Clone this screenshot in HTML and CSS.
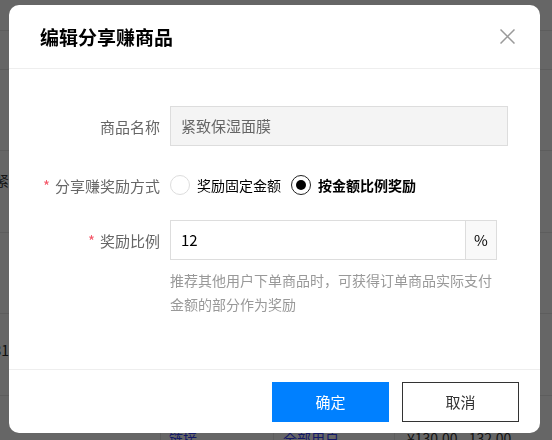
FILE: index.html
```html
<!DOCTYPE html>
<html lang="zh-CN">
<head>
<meta charset="utf-8">
<title>编辑分享赚商品</title>
<link rel="stylesheet" href="styles.css">
</head>
<body>
<div class="page">
  <div class="row row-top"></div>
  <div class="row row-head"></div>
  <div class="row row-a"></div>
  <div class="row row-b"><div class="bg-clip"><span class="bg-name">紧</span></div></div>
  <div class="row row-a"></div>
  <div class="row row-b"><div class="bg-date"><span>31</span></div></div>
  <div class="row row-last">
    <div class="cell cell-1"></div>
    <div class="cell cell-2"><span class="bg-link">链接</span></div>
    <div class="cell cell-3"><span class="bg-link">全部用户</span></div>
    <div class="cell cell-4"><span class="bg-price">¥130.00 - 132.00</span></div>
  </div>
</div>
<div class="mask"></div>
<div class="modal">
  <div class="modal-header">
    <h2 class="modal-title">编辑分享赚商品</h2>
    <span class="modal-close">
      <svg width="15" height="15" viewBox="0 0 15 15"><path d="M0.5 0.5 L14.5 14.5 M14.5 0.5 L0.5 14.5" stroke="#9a9a9a" stroke-width="1.5" fill="none"/></svg>
    </span>
  </div>
  <div class="modal-body">
    <div class="form-row row-name">
      <label class="form-label">商品名称</label>
      <div class="input input-disabled">紧致保湿面膜</div>
    </div>
    <div class="form-row row-radio">
      <label class="form-label"><span class="req">*</span>分享赚奖励方式</label>
      <div class="radio-group">
        <span class="radio"></span><span class="radio-text">奖励固定金额</span>
        <span class="radio radio-on"></span><span class="radio-text radio-text-on">按金额比例奖励</span>
      </div>
    </div>
    <div class="form-row row-ratio">
      <label class="form-label"><span class="req">*</span>奖励比例</label>
      <div class="input-group">
        <div class="input input-ratio">12</div>
        <div class="addon">%</div>
      </div>
    </div>
    <p class="helper">推荐其他用户下单商品时，可获得订单商品实际支付<br>金额的部分作为奖励</p>
  </div>
  <div class="modal-footer">
    <button class="btn btn-primary">确定</button>
    <button class="btn btn-default">取消</button>
  </div>
</div>
</body>
</html>
```
FILE: styles.css
```css
* { box-sizing: border-box; }
html, body { margin: 0; padding: 0; }
body {
  width: 552px;
  height: 440px;
  overflow: hidden;
  background: #fff;
  font-family: "Noto Sans CJK SC", "Noto Sans", sans-serif;
  color: #333;
}
.page { width: 552px; height: 440px; overflow: hidden; }
.row { border-bottom: 1px solid #e8e8e8; font-size: 14px; line-height: 20px; }
.row-top { height: 31px; }
.row-head { height: 39px; }
.row-a { height: 81px; }
.row-b { height: 82px; }
.bg-clip { width: 9px; overflow: hidden; padding-top: 19px; }
.bg-name { display: block; margin-left: -5px; white-space: nowrap; color: #333; }
.bg-date { width: 9px; display: flex; justify-content: flex-end; padding-top: 26px; white-space: nowrap; color: #222; }
.row-last { display: flex; height: 44px; border-bottom: none; overflow: hidden; }
.cell { padding-top: 32px; white-space: nowrap; }
.cell-1 { width: 160px; }
.cell-2 { width: 113px; border-left: 1px solid #e8e8e8; padding-left: 8px; }
.cell-3 { width: 121px; border-left: 1px solid #e8e8e8; padding-left: 9px; }
.cell-4 { flex: 1; border-left: 1px solid #e8e8e8; padding-left: 12px; }
.bg-link { color: #3340ff; text-decoration: underline; }
.bg-price { color: #333; }

.mask {
  position: fixed;
  inset: 0;
  background: rgba(0, 0, 0, 0.6);
}
.modal {
  position: absolute;
  left: 9px;
  top: 5px;
  width: 531px;
  height: 428px;
  background: #fff;
  border-radius: 10px;
  display: flex;
  flex-direction: column;
  overflow: hidden;
}
.modal-header {
  height: 64px;
  border-bottom: 1px solid #eee;
  display: flex;
  align-items: center;
  justify-content: space-between;
  padding: 0 25px 0 31px;
}
.modal-title {
  margin: 0;
  font-size: 19px;
  font-weight: 700;
  color: #000;
  line-height: 26px;
}
.modal-close { display: flex; width: 15px; height: 15px; }
.modal-body {
  flex: 1;
  padding-top: 37px;
}
.form-row { display: flex; align-items: center; }
.row-name { height: 40px; margin-bottom: 19px; }
.row-radio { height: 40px; margin-bottom: 15px; }
.row-ratio { height: 40px; }
.form-label {
  width: 161px;
  padding-right: 10px;
  text-align: right;
  font-size: 15px;
  color: #666;
  white-space: nowrap;
}
.req { color: #f5586a; margin-right: 5px; }
.input {
  height: 40px;
  border: 1px solid #ddd;
  padding-left: 10px;
  font-size: 15px;
  line-height: 38px;
}
.input-disabled { width: 338px; background: #f4f4f4; color: #666; }
.radio-group { display: flex; align-items: center; }
.radio {
  width: 20px;
  height: 20px;
  border: 1px solid #ddd;
  border-radius: 50%;
  background: #fff;
  margin-right: 7px;
  display: flex;
  align-items: center;
  justify-content: center;
}
.radio-on { border: 1.5px solid #222; }
.radio-on::after {
  content: "";
  width: 10px;
  height: 10px;
  border-radius: 50%;
  background: #000;
}
.radio-text { font-size: 14px; color: #000; margin-right: 10px; }
.radio-text-on { font-weight: 700; }
.input-group { display: flex; width: 327px; }
.input-ratio { width: 295px; border-right: none; color: #000; background: #fff; }
.addon {
  width: 32px;
  height: 40px;
  border: 1px solid #ddd;
  background: #f9f9f9;
  font-size: 15px;
  color: #000;
  line-height: 38px;
  text-align: center;
}
.helper {
  margin: 8px 0 0 161px;
  width: 345px;
  font-size: 14px;
  line-height: 24px;
  color: #999;
  white-space: nowrap;
}
.modal-footer {
  height: 64px;
  border-top: 1px solid #eee;
  display: flex;
  align-items: center;
  justify-content: flex-end;
  gap: 13px;
  padding-right: 21px;
}
.btn {
  width: 117px;
  height: 40px;
  font-family: inherit;
  font-size: 15px;
  cursor: pointer;
  border-radius: 0;
}
.btn-primary { background: #0080ff; color: #fff; border: none; }
.btn-default { background: #fff; color: #333; border: 1px solid #333; }
```
